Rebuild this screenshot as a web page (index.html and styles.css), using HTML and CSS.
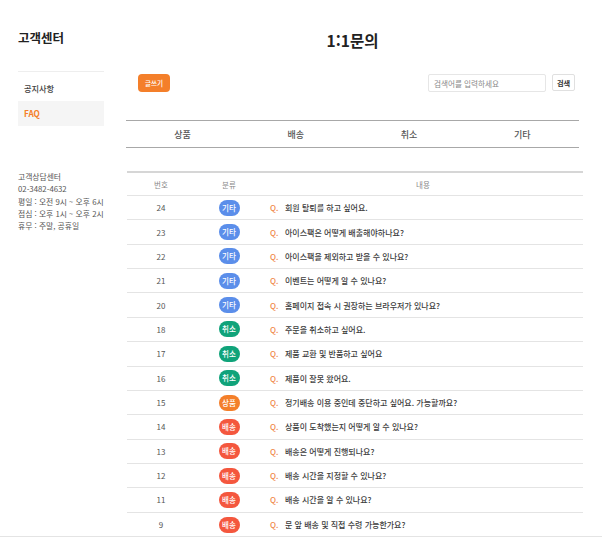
FILE: index.html
```html
<!DOCTYPE html>
<html lang="ko">
<head>
<meta charset="utf-8">
<title>1:1문의</title>
<link rel="stylesheet" href="styles.css">
</head>
<body>
<div class="page">
  <aside class="sidebar">
    <h1 class="side-title">고객센터</h1>
    <nav class="side-nav">
      <a class="side-item">공지사항</a>
      <a class="side-item active">FAQ</a>
    </nav>
    <div class="side-info">
      <p>고객상담센터</p>
      <p>02-3482-4632</p>
      <p>평일 : 오전 9시 ~ 오후 6시</p>
      <p>점심 : 오후 1시 ~ 오후 2시</p>
      <p>휴무 : 주말, 공휴일</p>
    </div>
  </aside>
  <main class="main">
    <h2 class="main-title">1:1문의</h2>
    <div class="toolbar">
      <button class="write-btn">글쓰기</button>
      <div class="search">
        <input class="search-input" type="text" placeholder="검색어를 입력하세요">
        <button class="search-btn">검색</button>
      </div>
    </div>
    <div class="tabs">
      <span class="tab">상품</span>
      <span class="tab">배송</span>
      <span class="tab">취소</span>
      <span class="tab">기타</span>
    </div>
    <div class="board">
      <div class="row head">
        <span class="c-no">번호</span>
        <span class="c-cat">분류</span>
        <span class="c-title center">내용</span>
      </div>
      <div class="row"><span class="c-no">24</span><span class="c-cat"><i class="badge etc">기타</i></span><span class="c-title"><b class="q">Q.</b>회원 탈퇴를 하고 싶어요.</span></div>
      <div class="row"><span class="c-no">23</span><span class="c-cat"><i class="badge etc">기타</i></span><span class="c-title"><b class="q">Q.</b>아이스팩은 어떻게 배출해야하나요?</span></div>
      <div class="row"><span class="c-no">22</span><span class="c-cat"><i class="badge etc">기타</i></span><span class="c-title"><b class="q">Q.</b>아이스팩을 제외하고 받을 수 있나요?</span></div>
      <div class="row"><span class="c-no">21</span><span class="c-cat"><i class="badge etc">기타</i></span><span class="c-title"><b class="q">Q.</b>이벤트는 어떻게 알 수 있나요?</span></div>
      <div class="row"><span class="c-no">20</span><span class="c-cat"><i class="badge etc">기타</i></span><span class="c-title"><b class="q">Q.</b>홈페이지 접속 시 권장하는 브라우저가 있나요?</span></div>
      <div class="row"><span class="c-no">18</span><span class="c-cat"><i class="badge cancel">취소</i></span><span class="c-title"><b class="q">Q.</b>주문을 취소하고 싶어요.</span></div>
      <div class="row"><span class="c-no">17</span><span class="c-cat"><i class="badge cancel">취소</i></span><span class="c-title"><b class="q">Q.</b>제품 교환 및 반품하고 싶어요</span></div>
      <div class="row"><span class="c-no">16</span><span class="c-cat"><i class="badge cancel">취소</i></span><span class="c-title"><b class="q">Q.</b>제품이 잘못 왔어요.</span></div>
      <div class="row"><span class="c-no">15</span><span class="c-cat"><i class="badge product">상품</i></span><span class="c-title"><b class="q">Q.</b>정기배송 이용 중인데 중단하고 싶어요. 가능할까요?</span></div>
      <div class="row"><span class="c-no">14</span><span class="c-cat"><i class="badge ship">배송</i></span><span class="c-title"><b class="q">Q.</b>상품이 도착했는지 어떻게 알 수 있나요?</span></div>
      <div class="row"><span class="c-no">13</span><span class="c-cat"><i class="badge ship">배송</i></span><span class="c-title"><b class="q">Q.</b>배송은 어떻게 진행되나요?</span></div>
      <div class="row"><span class="c-no">12</span><span class="c-cat"><i class="badge ship">배송</i></span><span class="c-title"><b class="q">Q.</b>배송 시간을 지정할 수 있나요?</span></div>
      <div class="row"><span class="c-no">11</span><span class="c-cat"><i class="badge ship">배송</i></span><span class="c-title"><b class="q">Q.</b>배송 시간을 알 수 있나요?</span></div>
      <div class="row last"><span class="c-no">9</span><span class="c-cat"><i class="badge ship">배송</i></span><span class="c-title"><b class="q">Q.</b>문 앞 배송 및 직접 수령 가능한가요?</span></div>
    </div>
  </main>
</div>
<footer class="footer"></footer>
</body>
</html>
```

FILE: styles.css
```css
* { box-sizing: border-box; }
html, body { margin: 0; padding: 0; background: #fff; }
body {
  font-family: "Noto Sans CJK KR", "Noto Sans", sans-serif;
  color: #333;
  overflow: hidden;
}
.page {
  display: grid;
  grid-template-columns: 86px 457px;
  column-gap: 22px;
  padding-left: 18px;
  height: 536px;
}
.sidebar { padding-top: 28px; }
.side-title {
  margin: 0;
  font-size: 12.5px;
  line-height: 20px;
  font-weight: 700;
  color: #222;
}
.side-nav {
  margin-top: 23px;
  border-top: 1px solid #eeeeee;
  padding-top: 4px;
  display: flex;
  flex-direction: column;
}
.side-item {
  display: block;
  height: 25px;
  line-height: 25px;
  padding-left: 6px;
  font-size: 8.2px;
  font-weight: 500;
  color: #444;
}
.side-item.active {
  background: #f5f5f5;
  color: #f47f2a;
  font-weight: 700;
}
.side-info {
  margin-top: 45px;
  font-size: 7.8px;
  line-height: 12.3px;
  color: #555;
  white-space: nowrap;
}
.side-info p { margin: 0; }

.main { padding-top: 28px; }
.main-title {
  margin: 0;
  text-align: center;
  font-size: 15.5px;
  line-height: 24px;
  font-weight: 700;
  color: #222;
  padding-right: 4px;
}
.toolbar {
  margin-top: 22px;
  display: flex;
  justify-content: space-between;
  align-items: flex-start;
  padding-left: 12px;
  padding-right: 8px;
}
.write-btn {
  width: 32px;
  height: 18px;
  border: 0;
  border-radius: 4px;
  background: #f47f2a;
  color: #fff;
  font-family: inherit;
  font-size: 6.5px;
  font-weight: 500;
  padding: 0;
}
.search { display: flex; gap: 6px; align-items: flex-start; }
.search-input {
  width: 118px;
  height: 18px;
  border: 1px solid #e6e6e6;
  border-radius: 2px;
  padding: 0 5px;
  font-family: inherit;
  font-size: 7.6px;
  color: #555;
  outline: none;
}
.search-input::placeholder { color: #888; }
.search-btn {
  width: 23px;
  height: 17px;
  border: 1px solid #e0e0e0;
  border-radius: 2px;
  background: #fff;
  padding: 0;
  font-family: inherit;
  font-size: 7.2px;
  font-weight: 700;
  color: #333;
}
.tabs {
  margin-top: 28px;
  width: 453px;
  display: grid;
  grid-template-columns: repeat(4, 1fr);
  border-top: 1px solid #a8a8a8;
  border-bottom: 1px solid #a8a8a8;
  height: 28px;
  align-items: center;
}
.tab {
  text-align: center;
  font-size: 9px;
  color: #555;
  font-weight: 500;
}
.board {
  margin-top: 23px;
  border-top: 2px solid #d6d6d6;
  margin-left: 1px;
  width: 456px;
}
.row {
  display: grid;
  grid-template-columns: 68px 68px 1fr;
  align-items: center;
  height: 24.36px;
  border-bottom: 1px solid #e4e4e4;
  font-size: 8px;
  color: #555;
}
.row.head { height: 23px; color: #888; font-size: 7.5px; }
.row.last { border-bottom: 0; }
.c-no, .c-cat { text-align: center; }
.c-title { padding-left: 7px; color: #3c3c3c; font-weight: 500; }
.c-title.center { text-align: center; padding-left: 0; font-weight: 400; color: #888; }
.q {
  color: #f08a4b;
  font-weight: 500;
  display: inline-block;
  width: 15px;
}
.badge {
  display: inline-block;
  font-style: normal;
  width: 21px;
  height: 16px;
  line-height: 16px;
  border-radius: 8px;
  color: #fff;
  font-size: 7.5px;
  font-weight: 500;
  text-align: center;
  vertical-align: middle;
}
.badge.etc { background: #5b8eea; }
.badge.cancel { background: #10a37a; }
.badge.product { background: #f47f2a; }
.badge.ship { background: #f4573e; }
.footer {
  border-top: 1px solid #e4e4e4;
  height: 4px;
}
```
